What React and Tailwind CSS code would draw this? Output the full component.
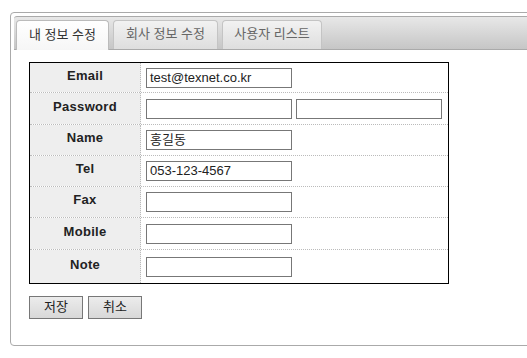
const rows = [
  { label: "Email", values: ["test@texnet.co.kr"], h: "h-[30px]" },
  { label: "Password", values: ["", ""], h: "h-[32px]" },
  { label: "Name", values: ["홍길동"], h: "h-[31px]" },
  { label: "Tel", values: ["053-123-4567"], h: "h-[31px]" },
  { label: "Fax", values: [""], h: "h-[31px]" },
  { label: "Mobile", values: [""], h: "h-[32px]" },
  { label: "Note", values: [""], h: "h-[33px]" },
];

const tabs = ["내 정보 수정", "회사 정보 수정", "사용자 리스트"];

const App = () => {
  return (
    <div
      className="w-[527px] h-[358px] overflow-hidden bg-white pt-[12px] pl-[10px]"
      style={{ fontFamily: '"Liberation Sans", "Noto Sans CJK KR", sans-serif' }}
    >
      {/* Outer panel */}
      <div className="w-[560px] h-[334px] border border-[#aaa] rounded-[4px] p-[3px]">
        {/* Tab bar */}
        <div className="h-[34px] flex items-end gap-[4px] pl-[2px] border-y border-[#aaa] rounded-tl-[3px] bg-gradient-to-b from-[#e8e8e8] to-[#c6c6c6]">
          {tabs.map((t, i) =>
            i === 0 ? (
              <div
                key={t}
                className="h-[30px] -mb-px w-[93px] flex items-center justify-center pb-[2px] rounded-t-[4px] border border-b-0 border-[#bbb] bg-gradient-to-b from-white to-[#f6f6f6] text-[13px] text-[#333]"
              >
                {t}
              </div>
            ) : (
              <div
                key={t}
                className={`h-[29px] flex items-center justify-center pb-[2px] rounded-t-[4px] border border-b-0 border-[#c4c4c4] bg-gradient-to-b from-[#f2f2f2] to-[#dedede] text-[13px] text-[#666] ${
                  i === 1 ? "w-[105px]" : "w-[100px]"
                }`}
              >
                {t}
              </div>
            )
          )}
        </div>

        {/* Form */}
        <div className="pl-[15px] pt-[12px]">
          <div className="w-[420px] border border-black">
            {rows.map((r, i) => (
              <div
                key={r.label}
                className={`flex ${r.h} ${
                  i < rows.length - 1 ? "border-b border-dotted border-[#bbb]" : ""
                }`}
              >
                <div className="w-[111px] bg-[#eeeeee] border-r border-dotted border-[#bbb] flex items-center justify-center pb-[4px] text-[13px] font-bold tracking-[0.3px] text-[#222]">
                  {r.label}
                </div>
                <div className="flex-1 flex items-center gap-[4px] pl-[5px]">
                  {r.values.map((v, j) => (
                    <div
                      key={j}
                      className="w-[146px] h-[20px] border border-[#777] flex items-center px-[3px] text-[13px] text-[#222] bg-white"
                    >
                      {v}
                    </div>
                  ))}
                </div>
              </div>
            ))}
          </div>

          {/* Buttons */}
          <div className="flex gap-[5px] mt-[12px]">
            {["저장", "취소"].map((b) => (
              <button
                key={b}
                className="w-[54px] h-[23px] border border-[#777] bg-gradient-to-b from-[#ececec] to-[#d8d8d8] text-[13px] text-[#222] flex items-center justify-center pb-[1px]"
              >
                {b}
              </button>
            ))}
          </div>
        </div>
      </div>
    </div>
  );
};

export default App;
